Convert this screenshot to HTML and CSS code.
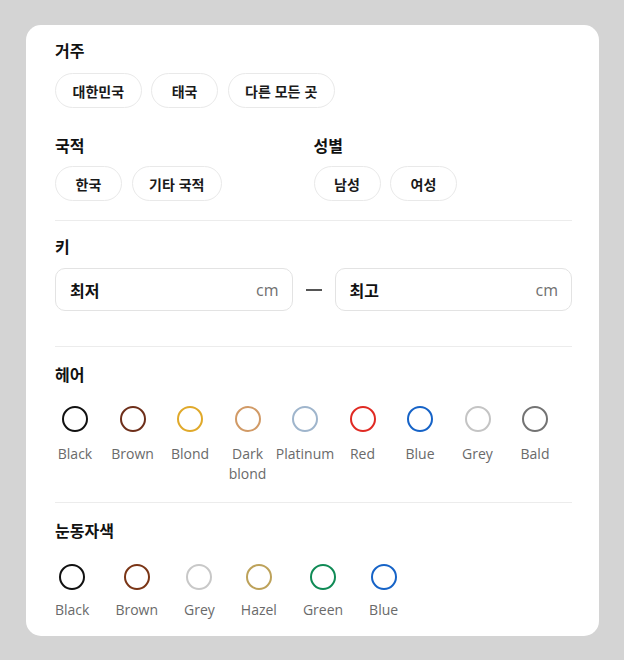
FILE: index.html
```html
<!DOCTYPE html>
<html lang="ko">
<head>
<meta charset="utf-8">
<link rel="stylesheet" href="styles.css">
</head>
<body>
<div class="card">
  <section class="sec sec-first">
    <h3 class="title">거주</h3>
    <div class="chips">
      <span class="chip">대한민국</span>
      <span class="chip">태국</span>
      <span class="chip">다른 모든 곳</span>
    </div>
  </section>
  <div class="cols">
    <section class="col">
      <h3 class="title">국적</h3>
      <div class="chips">
        <span class="chip">한국</span>
        <span class="chip">기타 국적</span>
      </div>
    </section>
    <section class="col">
      <h3 class="title">성별</h3>
      <div class="chips">
        <span class="chip">남성</span>
        <span class="chip">여성</span>
      </div>
    </section>
  </div>
  <hr class="divider d1">
  <section class="sec">
    <h3 class="title">키</h3>
    <div class="range">
      <div class="field"><span class="fl">최저</span><span class="unit">cm</span></div>
      <span class="dash"></span>
      <div class="field"><span class="fl">최고</span><span class="unit">cm</span></div>
    </div>
  </section>
  <hr class="divider d2">
  <section class="sec">
    <h3 class="title">헤어</h3>
    <div class="hair">
      <div class="sw"><span class="ring" style="border-color:#111111"></span><span class="lbl">Black</span></div>
      <div class="sw"><span class="ring" style="border-color:#6e2f1a"></span><span class="lbl">Brown</span></div>
      <div class="sw"><span class="ring" style="border-color:#e0a92a"></span><span class="lbl">Blond</span></div>
      <div class="sw"><span class="ring" style="border-color:#d19a66"></span><span class="lbl">Dark blond</span></div>
      <div class="sw"><span class="ring" style="border-color:#9fb5cc"></span><span class="lbl">Platinum</span></div>
      <div class="sw"><span class="ring" style="border-color:#e02a23"></span><span class="lbl">Red</span></div>
      <div class="sw"><span class="ring" style="border-color:#1663c7"></span><span class="lbl">Blue</span></div>
      <div class="sw"><span class="ring" style="border-color:#c4c4c4"></span><span class="lbl">Grey</span></div>
      <div class="sw"><span class="ring" style="border-color:#737373"></span><span class="lbl">Bald</span></div>
    </div>
  </section>
  <hr class="divider d3">
  <section class="sec">
    <h3 class="title">눈동자색</h3>
    <div class="eyes">
      <div class="sw"><span class="ring" style="border-color:#111111"></span><span class="lbl">Black</span></div>
      <div class="sw"><span class="ring" style="border-color:#7a3516"></span><span class="lbl">Brown</span></div>
      <div class="sw"><span class="ring" style="border-color:#c8c8c8"></span><span class="lbl">Grey</span></div>
      <div class="sw"><span class="ring" style="border-color:#bda25a"></span><span class="lbl">Hazel</span></div>
      <div class="sw"><span class="ring" style="border-color:#0f8a55"></span><span class="lbl">Green</span></div>
      <div class="sw"><span class="ring" style="border-color:#1663c7"></span><span class="lbl">Blue</span></div>
    </div>
  </section>
</div>
</body>
</html>
```

FILE: styles.css
```css
* { box-sizing: border-box; }
html, body {
  margin: 0;
  padding: 0;
  background: #d4d4d4;
}
body {
  padding: 25px 0 0 26px;
  font-family: "Noto Sans CJK KR", "Open Sans", sans-serif;
  color: #111;
}
.card {
  width: 573px;
  height: 611px;
  background: #fff;
  border-radius: 15px;
  padding: 15px 27px 0 29px;
}
.title {
  margin: 0;
  font-size: 16px;
  line-height: 20px;
  font-weight: 700;
  color: #111;
}
.chips {
  display: flex;
  gap: 9.5px;
  margin-top: 13px;
}
.chip {
  height: 35px;
  min-width: 67px;
  padding: 0 16.5px;
  border: 1px solid #e9e9e9;
  border-radius: 18px;
  display: inline-flex;
  align-items: center;
  justify-content: center;
  font-size: 14px;
  font-weight: 700;
  color: #1a1a1a;
}
.cols {
  display: flex;
  margin-top: 27px;
}
.cols .chips { margin-top: 11px; }
.col { width: 259px; }
.divider {
  border: 0;
  border-top: 1px solid #ececec;
  margin: 0;
}
.d1 { margin-top: 19px; }
.d2 { margin-top: 35px; }
.d3 { margin-top: 18px; }
.d1 + .sec { margin-top: 15px; }
.d2 + .sec, .d3 + .sec { margin-top: 17px; }
.range {
  display: flex;
  align-items: center;
  margin-top: 12px;
}
.field {
  flex: 1;
  height: 43px;
  border: 1px solid #e3e3e3;
  border-radius: 10px;
  display: flex;
  align-items: center;
  justify-content: space-between;
  padding: 0 13px 0 14px;
}
.fl {
  font-size: 16px;
  font-weight: 700;
  color: #111;
}
.unit {
  font-family: "Open Sans", sans-serif;
  font-size: 16px;
  color: #707070;
}
.dash {
  width: 16px;
  height: 2px;
  background: #555;
  margin: 0 13px;
}
.hair {
  display: flex;
  gap: 17.5px;
  margin-top: 22px;
}
.hair .sw { width: 40px; }
.eyes {
  display: flex;
  gap: 26px;
  margin-top: 24px;
}
.sw {
  display: flex;
  flex-direction: column;
  align-items: center;
  text-align: center;
}
.ring {
  width: 26px;
  height: 26px;
  border-radius: 50%;
  border: 2.5px solid #111;
}
.lbl {
  margin-top: 12px;
  font-family: "Open Sans", sans-serif;
  font-size: 14px;
  line-height: 20px;
  color: #6a6a6a;
}
.eyes .lbl { margin-top: 10px; }
```
